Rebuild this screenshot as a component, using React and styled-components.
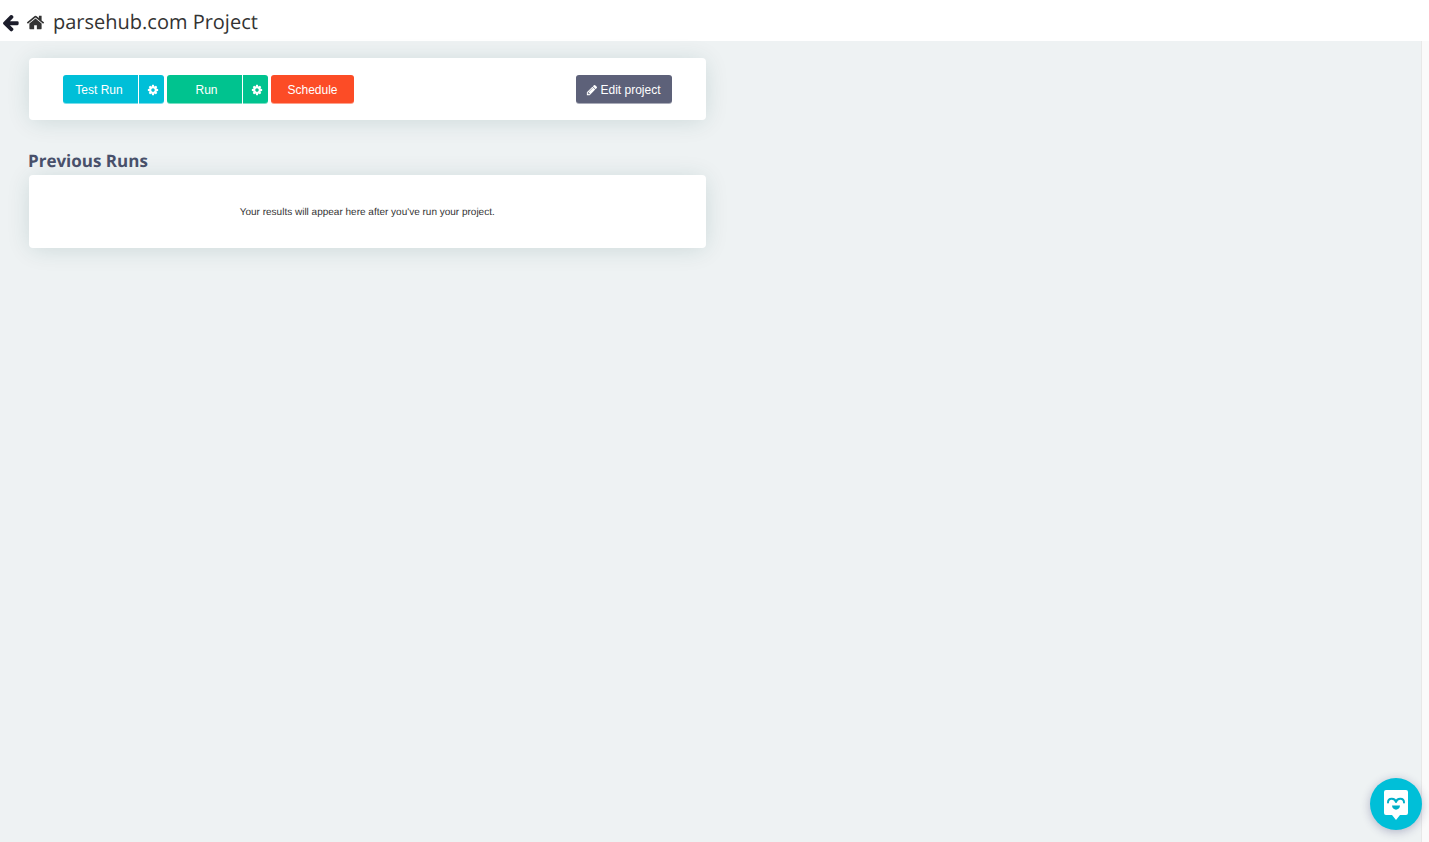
import React from "react";
import styled, { createGlobalStyle } from "styled-components";

const GlobalStyle = createGlobalStyle`
  * {
    box-sizing: border-box;
  }
  body {
    margin: 0;
    background-color: #eef2f3;
    color: #333333;
    font-family: "Liberation Sans", Arial, sans-serif;
    text-rendering: geometricPrecision;
  }
`;

const Page = styled.div`
  display: flex;
  flex-direction: column;
  min-height: 100vh;
`;

const Header = styled.header`
  display: flex;
  align-items: center;
  height: 41px;
  padding: 3px 1px 0;
  background-color: #ffffff;

  a {
    display: flex;
    color: #1c1d2b;
  }
  a + a {
    margin-left: 6px;
    color: #333333;
  }
`;

const Title = styled.h1`
  margin: 0 0 0 8px;
  font-family: "Open Sans", sans-serif;
  font-size: 20px;
  font-weight: 400;
  line-height: 28px;
`;

const Body = styled.div`
  display: flex;
  flex: 1;
`;

const Main = styled.main`
  flex: 1;
`;

const Gutter = styled.div`
  width: 8px;
  border-left: 1px solid #e8e8e8;
  background-color: #fafafa;
`;

const Column = styled.div`
  width: 50%;
  padding: 17px 5px 17px 29px;
`;

const Card = styled.section`
  display: flex;
  align-items: center;
  justify-content: ${props => (props.$center ? "center" : "space-between")};
  padding: ${props => (props.$center ? "28px 34px" : "17px 34px")};
  border-radius: 4px;
  background-color: #ffffff;
  box-shadow: 0 2px 24px -2px rgba(0, 75, 75, 0.16);
`;

const Heading = styled.h2`
  margin: 29px 0 2px -1px;
  font-family: "Open Sans", sans-serif;
  font-size: 17px;
  font-weight: 700;
  line-height: 24px;
  color: #48506a;
`;

const Message = styled.p`
  margin: 0;
  padding-top: 2px;
  font-size: 10px;
  line-height: 15px;
`;

const Actions = styled.div`
  display: flex;
  gap: 3px;
`;

const colors = {
  blue: "#00bfd8",
  green: "#00c38f",
  red: "#fc4c26",
  slate: "#5d6179"
};

const Button = styled.button`
  display: flex;
  align-items: center;
  justify-content: center;
  gap: 2px;
  width: ${props => props.$width}px;
  height: 28px;
  padding: 1px 0 0;
  border: none;
  border-radius: 3px;
  background-color: ${props => colors[props.$color]};
  box-shadow: 0 1px 0 ${props => colors[props.$color]}88;
  color: #ffffff;
  font-family: inherit;
  font-size: 12px;
  line-height: 16px;
  cursor: pointer;
`;

const Split = styled.div`
  display: flex;
  gap: 1px;

  ${Button}:first-child {
    padding-left: ${props => (props.$wide ? "4px" : "0")};
    padding-right: ${props => (props.$wide ? "0" : "3px")};
    border-radius: 3px 0 0 3px;
  }
  ${Button}:last-child {
    padding-left: 2px;
    border-radius: 0 3px 3px 0;
  }
`;

const ChatButton = styled.button`
  position: fixed;
  right: 7px;
  bottom: 12px;
  width: 52px;
  height: 52px;
  padding: 0;
  border: none;
  border-radius: 50%;
  background-color: #00bfd8;
  box-shadow: 0 2px 10px rgba(40, 40, 100, 0.3);
  cursor: pointer;

  svg {
    display: block;
  }
`;

const paths = {
  back:
    "M1664 896v128q0 53-32.5 90.5t-84.5 37.5h-704l293 294q38 36 38 90t-38 90l-75 76q-37 37-90 37-52 0-91-37l-651-652q-37-37-37-90 0-52 37-91l651-650q38-38 91-38 52 0 90 38l75 74q38 38 38 91t-38 91l-293 293h704q52 0 84.5 37.5t32.5 90.5z",
  home:
    "M1472 992v480q0 26-19 45t-45 19h-384v-384h-256v384h-384q-26 0-45-19t-19-45v-480q0-1 .5-3t.5-3l575-474 575 474q1 2 1 6zm223-69l-62 74q-8 9-21 11h-3q-13 0-21-7l-692-577-692 577q-12 8-24 7-13-2-21-11l-62-74q-8-10-7-23.5t11-21.5l719-599q32-26 76-26t76 26l244 204v-195q0-14 9-23t23-9h192q14 0 23 9t9 23v408l219 182q10 8 11 21.5t-7 23.5z",
  cog:
    "M1152 896q0-106-75-181t-181-75-181 75-75 181 75 181 181 75 181-75 75-181zm512-109v222q0 12-8 23t-20 13l-185 28q-19 54-39 91 35 50 107 138 10 12 10 25t-9 23q-27 37-99 108t-94 71q-12 0-26-9l-138-108q-44 23-91 38-16 136-29 186-7 28-36 28h-222q-14 0-24.5-8.5t-11.5-21.5l-28-184q-49-16-90-37l-141 107q-10 9-25 9-14 0-25-11-126-114-165-168-7-10-7-23 0-12 8-23 15-21 51-66.5t54-70.5q-27-50-41-99l-183-27q-13-2-21-12.5t-8-23.5v-222q0-12 8-23t19-13l186-28q14-46 39-92-40-57-107-138-10-12-10-24 0-10 9-23 26-36 98.5-107.5t94.5-71.5q13 0 26 10l138 107q44-23 91-38 16-136 29-186 7-28 36-28h222q14 0 24.5 8.5t11.5 21.5l28 184q49 16 90 37l142-107q9-9 24-9 13 0 25 10 129 119 165 170 7 8 7 22 0 12-8 23-15 21-51 66.5t-54 70.5q26 50 41 98l183 28q13 2 21 12.5t8 23.5z",
  pencil:
    "M491 1536l91-91-235-235-91 91v107h128v128h107zm523-928q0-22-22-22-10 0-17 7l-542 542q-7 7-7 17 0 22 22 22 10 0 17-7l542-542q7-7 7-17zm-54-192l416 416-832 832h-416v-416zm683 96q0 53-37 90l-166 166-416-416 166-165q36-38 90-38 53 0 91 38l235 234q37 39 37 91z"
};

const Icon = ({ name, size }) => (
  <svg
    width={size}
    height={size}
    viewBox="0 0 1792 1792"
    fill="currentColor"
    aria-hidden="true"
  >
    <path d={paths[name]} />
  </svg>
);

const ChatFace = () => (
  <svg width="52" height="52" viewBox="0 0 52 52" aria-hidden="true">
    <path
      d="M16 12h20a2 2 0 0 1 2 2v21a2 2 0 0 1-2 2h-6l-4 5-4-5h-6a2 2 0 0 1-2-2V14a2 2 0 0 1 2-2z"
      fill="#ffffff"
    />
    <path
      d="M18 24.500c0-5 7-5 8-.5 1-4.500 8-4.500 8 .5"
      fill="none"
      stroke="#00aec7"
      strokeWidth="2"
      strokeLinecap="round"
      strokeLinejoin="round"
    />
    <path d="M22 27.500h8c0 5.500-8 5.500-8 0z" fill="#00aec7" />
  </svg>
);

const RunButton = ({ label, color, wide }) => (
  <Split $wide={wide}>
    <Button type="button" $color={color} $width={75}>
      {label}
    </Button>
    <Button
      type="button"
      $color={color}
      $width={25}
      aria-label={`${label} settings`}
    >
      <Icon name="cog" size={12} />
    </Button>
  </Split>
);

const App = () => (
  <Page>
    <GlobalStyle />
    <Header>
      <a href="#back" aria-label="Back">
        <Icon name="back" size={19} />
      </a>
      <a href="#home" aria-label="Home">
        <Icon name="home" size={19} />
      </a>
      <Title>parsehub.com Project</Title>
    </Header>
    <Body>
      <Main>
        <Column>
          <Card>
            <Actions>
              <RunButton label="Test Run" color="blue" />
              <RunButton label="Run" color="green" wide />
              <Button type="button" $color="red" $width={83}>
                Schedule
              </Button>
            </Actions>
            <Button type="button" $color="slate" $width={96}>
              <Icon name="pencil" size={12} />
              Edit project
            </Button>
          </Card>
          <Heading>Previous Runs</Heading>
          <Card $center>
            <Message>
              Your results will appear here after you've run your project.
            </Message>
          </Card>
        </Column>
      </Main>
      <Gutter />
    </Body>
    <ChatButton type="button" aria-label="Open chat">
      <ChatFace />
    </ChatButton>
  </Page>
);

export default App;
